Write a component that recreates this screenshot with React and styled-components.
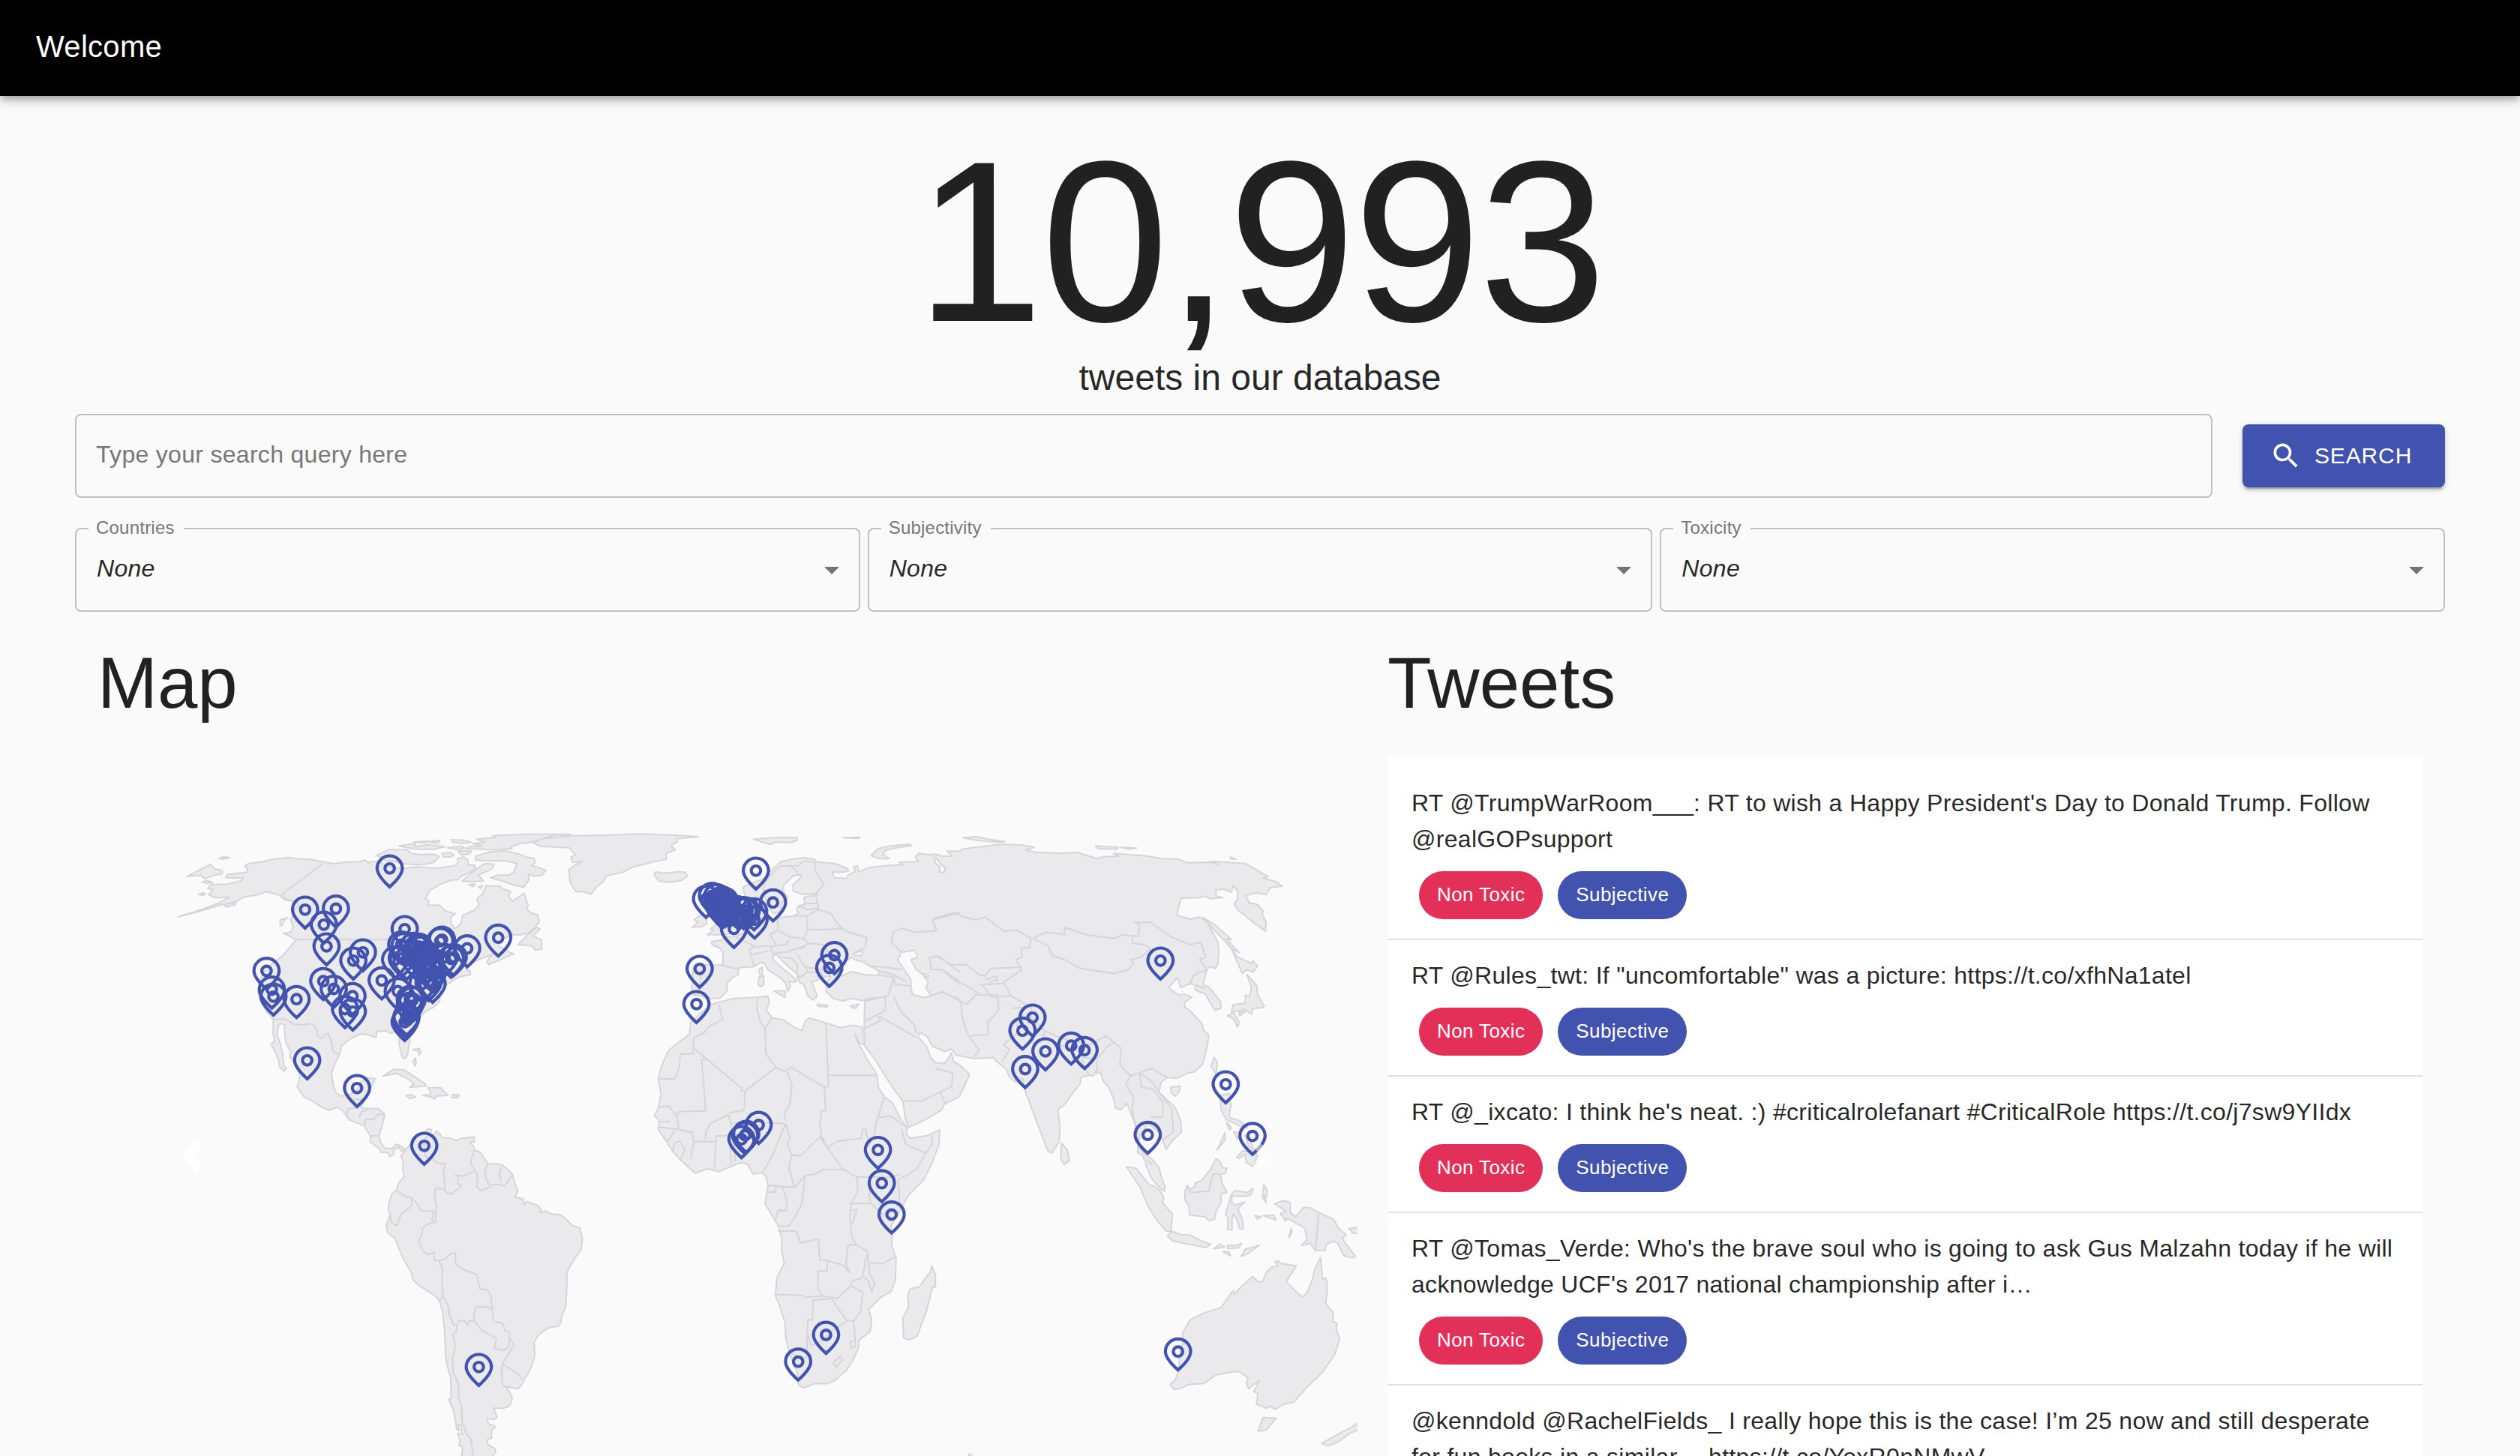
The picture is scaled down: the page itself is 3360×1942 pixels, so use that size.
import React from 'react';
import styled, { createGlobalStyle } from 'styled-components';

const INK = 'rgba(0, 0, 0, 0.87)';
const OUTLINE = '#c0c0c0';
const PRIMARY = '#4153af';
const SECONDARY = '#e33059';
const PAGE = '#fafafa';

const GlobalStyle = createGlobalStyle`
  *, *::before, *::after { box-sizing: border-box; }
  html, body { margin: 0; background: ${PAGE}; }
  body {
    font-family: 'Liberation Sans', Arial, Helvetica, sans-serif;
    color: ${INK};
    font-size: 32px;
    overflow: hidden;
  }
`;

const Page = styled.div`
  height: 100vh;
  overflow: hidden;
  display: flex;
  flex-direction: column;
`;

const AppBar = styled.header`
  flex: none;
  height: 128px;
  padding: 0 48px;
  display: flex;
  align-items: center;
  background: #000;
  box-shadow: 0 4px 8px -2px rgba(0, 0, 0, 0.2), 0 8px 10px rgba(0, 0, 0, 0.14),
    0 2px 20px rgba(0, 0, 0, 0.12);
`;

const AppTitle = styled.h6`
  margin: 0 0 4px;
  color: #fff;
  font-size: 40px;
  font-weight: 400;
  line-height: 64px;
  letter-spacing: 0.0075em;
`;

const Main = styled.main`
  flex: 1;
  padding: 44px 100px 0;
  display: flex;
  flex-direction: column;
`;

const Count = styled.h1`
  margin: 0;
  text-align: center;
  font-size: 306px;
  font-weight: 400;
  line-height: 300px;
  letter-spacing: -3px;
`;

const CountLabel = styled.h5`
  margin: 0 0 16px;
  text-align: center;
  font-size: 48px;
  font-weight: 400;
  line-height: 64px;
`;

const SearchRow = styled.form`
  display: flex;
  align-items: center;
  gap: 40px;
  margin-bottom: 40px;
`;

const SearchInput = styled.input`
  flex: 1;
  height: 112px;
  padding: 0 26px 3px;
  border: 2px solid ${OUTLINE};
  border-radius: 8px;
  background: transparent;
  color: ${INK};
  font: inherit;
  letter-spacing: 0.3px;
  outline: none;
  &::placeholder { color: #777; opacity: 1; }
`;

const SearchButton = styled.button`
  width: 270px;
  height: 84px;
  padding: 0 0 1px 36px;
  border: 0;
  border-radius: 8px;
  display: flex;
  align-items: center;
  gap: 16px;
  background: ${PRIMARY};
  color: #fff;
  font: inherit;
  font-size: 30px;
  letter-spacing: 0.02857em;
  text-transform: uppercase;
  box-shadow: 0 6px 2px -4px rgba(0, 0, 0, 0.2), 0 4px 4px rgba(0, 0, 0, 0.14),
    0 2px 10px rgba(0, 0, 0, 0.12);
`;

const ButtonIcon = styled.svg`
  width: 44px;
  height: 44px;
  fill: currentColor;
`;

const Filters = styled.div`
  display: grid;
  grid-template-columns: repeat(3, 1fr);
  gap: 10px;
  margin-bottom: 40px;
`;

const Select = styled.div`
  position: relative;
  height: 112px;
  padding: 0 12px 0 27px;
  display: flex;
  align-items: center;
  justify-content: space-between;
  border: 2px solid ${OUTLINE};
  border-radius: 8px;
`;

const SelectLabel = styled.label`
  position: absolute;
  top: -16px;
  left: 16px;
  padding: 0 12px 0 10px;
  background: ${PAGE};
  color: #777;
  font-size: 24px;
  line-height: 28px;
  letter-spacing: 0.22px;
`;

const SelectValue = styled.em`
  padding-bottom: 3px;
  letter-spacing: 0.3px;
`;

const SelectArrow = styled.svg`
  width: 48px;
  height: 48px;
  fill: rgba(0, 0, 0, 0.54);
`;

const Columns = styled.div`
  flex: 1;
  display: grid;
  grid-template-columns: 1680px 1380px;
  gap: 40px;
  padding: 0 30px;
`;

const Column = styled.section`
  display: flex;
  flex-direction: column;
`;

const Heading = styled.h3`
  margin: 0 0 42px;
  font-size: 96px;
  font-weight: 400;
  line-height: 110px;
`;

const MapStage = styled.div`
  position: relative;
  width: 1680px;
  height: 1068px;
`;

const MapCanvas = styled.svg`
  display: block;
  width: 1680px;
  height: 1068px;
  overflow: hidden;
`;

const Land = styled.path`
  fill: #eaeaec;
  stroke: #d6d6da;
  stroke-width: 2;
  stroke-linejoin: round;
`;

const Water = styled(Land)`
  fill: ${PAGE};
`;

const Border = styled(Land)`
  fill: none;
`;

const Pin = styled.g`
  fill: none;
  stroke: ${PRIMARY};
  stroke-width: 2;
  stroke-linecap: square;
`;

const SlideControl = styled.button`
  position: absolute;
  top: 0;
  bottom: 0;
  ${(p) => p.$side}: 0;
  width: 15%;
  padding: 0;
  border: 0;
  display: flex;
  align-items: center;
  justify-content: center;
  background: none;
  opacity: ${(p) => (p.$side === 'left' ? 1 : 0.5)};
`;

const Chevron = styled.svg`
  width: 40px;
  height: 40px;
  fill: #fff;
`;

const TweetList = styled.ul`
  margin: 0;
  padding: 16px 0;
  list-style: none;
  background: #fff;
`;

const TweetItem = styled.li`
  padding: 23px 32px 26px;
  border-bottom: 2px solid #e0e0e0;
`;

const TweetText = styled.p`
  margin: 0;
  line-height: 48px;
  letter-spacing: 0.3px;
`;

const ChipRow = styled.div`
  display: flex;
  gap: 20px;
  padding: 19px 10px 0;
`;

const Chip = styled.span`
  height: 64px;
  padding: 0 24px 1px;
  border-radius: 32px;
  display: inline-flex;
  align-items: center;
  background: ${(p) => (p.$tone === 'secondary' ? SECONDARY : PRIMARY)};
  color: #fff;
  font-size: 26px;
  letter-spacing: 0.4px;
`;

/* The map is drawn from regional sheets: each has an origin and a scale per axis. */
const SHEETS = {
  W: [200, 1080, 2.8, 3],
  N: [720, 1080, 2.8, 3],
  E: [1240, 1080, 2.45, 3],
  S: [200, 1480, 2.45, 3],
  F: [840, 1320, 2.529, 2.521],
  P: [1400, 1400, 3, 2.893],
};

const project = (sheet, pair) => {
  const [ox, oy, sx, sy] = SHEETS[sheet];
  const [x, y] = pair.split(',').map(Number);
  return [+(ox + x / sx).toFixed(1), +(oy + y / sy).toFixed(1)];
};

const run = (sheet, points) =>
  points.trim().split(/\s+/).map((p) => project(sheet, p).join(',')).join(' ');

const closed = (...parts) => `M${parts.map(([s, p]) => run(s, p)).join(' ')}Z`;
const many = (sheet, list, end) => list.map((p) => `M${run(sheet, p)}${end}`).join('');

const NORTH_AMERICA = closed(['W', `104,429 150,414 200,397 260,372 296,350 244,352 218,340 236,318 215,316 228,300 285,298
  340,284 348,274 283,272 287,260 362,250 364,240 355,226 366,216 420,208 450,200 516,191 560,198 596,198 650,209 688,216
  720,211 780,208 803,202 812,212 835,206 865,214 900,230 950,234 1000,228 1060,234 1095,230 1140,224 1150,210 1148,196
  1170,188 1186,202 1190,222 1212,222 1214,238 1195,250 1165,264 1150,280 1125,282 1085,298 1045,322 1028,356 1042,364
  1036,382 1080,382 1105,406 1140,416 1125,428 1122,448 1138,476 1160,458 1168,422 1212,402 1228,380 1220,356 1240,340
  1256,304 1306,306 1320,318 1346,326 1338,346 1354,366 1396,334 1412,384 1404,394 1420,412 1446,420 1454,448 1436,470
  1415,492 1385,500 1352,500 1320,516 1300,545 1330,560 1344,572 1358,576 1330,590 1264,620 1258,610 1268,590 1282,576
  1250,590 1225,600 1190,620 1180,640 1196,645 1195,660 1160,668 1135,680 1110,700 1084,720 1082,765 1060,790 1030,806
  1005,832 985,868 968,890 970,925 960,985 950,997 942,990 930,940 932,905 915,885 900,895 880,885 846,887 844,910 830,908
  815,900 785,897 750,915 715,945 707,980 690,1015 678,1055 684,1100 694,1132 712,1146 750,1138 775,1120 790,1085 815,1073
  842,1076 825,1110 812,1130 800,1170 785,1190 800,1195 852,1196 876,1218 868,1260 855,1305 863,1335 878,1355 903,1355
  920,1338 943,1350 954,1362 937,1365 931,1350 912,1360 908,1380 897,1388 886,1372 863,1370 855,1355 823,1330 823,1305
  800,1265 743,1240 720,1205 700,1190 670,1202 640,1190 605,1165 575,1150 550,1110 560,1065 545,1020 522,990 525,965
  510,940 504,910 502,875 504,862 490,855 480,862 474,900 488,940 496,985 500,1025 510,1034 500,1046 484,1030 480,1000
  466,965 452,938 466,925 460,900 460,840 430,800 405,740 408,690 430,640 470,605 500,580 530,540 545,520 520,505 500,495
  525,490 535,470 525,440 540,400 555,378 530,365 505,362 480,340 430,328 410,338 350,350 320,368 260,382 220,396 150,416`]);

const EURASIA = closed(
  ['N', `758,310 800,290 835,275 860,245 900,208 940,198 985,192 1025,198 1030,208 1100,215 1148,235 1152,245 1130,250
    1090,250 1100,272 1145,275 1150,262 1178,245 1170,228 1185,225 1190,250 1225,232 1280,225 1355,220 1340,210 1412,208
    1402,190 1415,175 1450,180 1478,178 1500,186 1540,185 1520,166 1568,165`],
  ['E', `105,158 150,150 235,138 300,142 340,150 312,162 345,170 430,174 480,170 510,182 548,196 560,188 615,186 600,175
    650,180 700,184 760,196 810,198 840,212 915,210 942,220 920,206 1030,215 1105,268 1088,274 1132,288 1150,306 1112,312
    1098,340 1070,332 1032,342 1042,372 1068,378 1088,405 1085,420 1098,450 1096,486 1055,450 1005,400 994,375 1004,360
    1006,325 990,305 984,330 960,318 934,320 935,345 955,352 915,356 900,346 880,352 820,354 806,422 850,438 880,430
    905,448 940,530 944,570 940,620 932,635 912,628 905,640 900,660 893,700 912,710 950,770 950,795 930,802 912,765
    898,735 880,730 865,718 868,702 852,696 840,700 820,712 808,672 780,712 790,722 812,742 832,738 855,750 832,770
    832,790 850,805 890,858 892,880 910,900 908,930 898,985 890,1020 865,1048 840,1055 805,1075 775,1072 755,1090
    748,1130 800,1190 818,1240 822,1290`],
  ['P', `526,318 490,350 465,385 450,348 435,320 400,290 385,292 372,320 360,330 352,370 375,400 410,425 436,455 445,490
    460,530 458,546 440,535 405,495 388,455 372,410 350,398 355,340 345,300 330,260 308,208 283,232 262,226 258,200
    238,150 212,120 205,95 185,80 175,100 150,100 122,108 122,130 105,150 60,210 32,232`],
  ['F', `1450,460 1448,510 1422,550 1408,540 1370,440 1332,340 1325,300 1300,310 1280,295 1270,270 1235,240 1225,228
    1160,232 1100,220 1085,200 1060,208 1020,190 1000,155 975,143 972,160 1000,190 1015,230 1030,245 1060,248 1070,235
    1085,212 1090,240 1120,260 1145,285 1125,330 1110,360 1060,385 1050,405 1000,435 940,462 930,440 920,375 890,335
    860,290 830,240 785,180 790,130 790,90 792,30`],
  ['N', `1212,765 1160,755 1130,765 1095,755 1070,730 1070,700 1085,665 1050,670 1030,685 1015,690 1035,745 1020,762
    1000,745 985,700 968,690 965,660 940,640 900,600 885,580 868,585 870,600 900,630 935,660 958,685 950,690 930,688
    935,705 925,728 918,695 900,675 850,640 838,615 820,612 800,628 742,632 740,660 715,675 698,695 700,720 690,735
    670,755 620,755 600,745 572,740 565,720 568,700 572,630 600,620 678,622 684,610 682,570 670,552 642,540 640,528
    680,520 700,508 730,508 755,495 770,480 800,455 825,450 830,420 850,395 855,440 870,445 900,430 945,425 965,415
    958,400 965,385 990,378 985,355 990,348 1035,342 1035,336 975,338 945,325 945,300 975,270 975,260 945,265 910,300
    905,320 925,350 905,370 895,410 870,415 848,380 840,345 800,375 770,370`]);

const AFRICA = closed(['F', `272,50 300,42 345,30 430,25 465,22 470,40 460,70 480,95 520,102 550,125 580,138 592,105
  605,95 655,110 710,128 745,120 782,125 790,150 790,185 775,180 757,148 770,180 800,235 832,285 838,330 858,360 885,380
  910,430 935,465 932,485 945,500 1005,490 1045,472 1042,520 1020,580 990,640 940,690 900,760 880,795 885,830 882,860
  897,900 895,980 880,1015 845,1035 805,1075 815,1110 810,1150 770,1180 772,1200 755,1240 730,1280 690,1315 665,1325
  620,1325 585,1340 568,1330 565,1290 540,1230 525,1170 523,1120 500,1050 490,1030 495,970 520,920 512,880 510,830
  498,790 455,720 465,660 460,630 445,615 415,620 395,585 370,582 300,612 260,602 220,618 170,572 145,545 120,505
  95,470 98,440 82,422 95,400 105,350 95,300 105,260 130,205 160,180 200,150 205,110`]);

const SOUTH_AMERICA = closed(['S', `835,160 850,140 870,110 890,100 910,75 920,80 912,100 922,110 935,85 945,95 955,112
  985,115 1000,125 1015,115 1060,110 1058,130 1045,130 1058,150 1060,162 1080,172 1105,218 1130,216 1150,222 1170,240
  1185,260 1190,290 1202,322 1192,350 1220,358 1222,382 1230,368 1268,385 1278,402 1275,414 1292,406 1312,418 1340,420
  1365,445 1380,464 1405,474 1413,520 1408,560 1382,605 1362,650 1362,710 1358,790 1345,822 1343,850 1334,866 1300,874
  1270,900 1255,930 1257,985 1248,1020 1238,1050 1222,1080 1215,1100 1202,1118 1180,1112 1160,1108 1172,1125 1184,1155
  1175,1185 1155,1195 1122,1195 1134,1230 1125,1240 1102,1236 1104,1255 1128,1268 1115,1285 1116,1314 1102,1320
  1102,1338 1128,1358 1130,1370 1118,1390 1018,1390 1022,1350 1010,1345 1012,1320 1005,1295 1020,1300 1015,1262
  1006,1260 1010,1285 1002,1280 992,1205 976,1160 984,1155 982,1070 972,1030 966,990 962,880 956,810 946,765 928,742
  880,705 858,680 855,655 825,590 800,515 776,492 772,460 785,420 778,400 780,375 790,338 805,322 812,295 830,268
  826,240 828,215 820,185`]);

const AUSTRALIA = closed(['P', `900,818 912,815 925,825 985,835 945,895 985,935 1010,955 1030,935 1050,885 1058,850
  1082,803 1090,885 1102,880 1108,898 1108,935 1103,980 1133,1015 1132,1050 1148,1055 1145,1080 1158,1115 1140,1175
  1085,1250 1030,1300 975,1360 935,1368 900,1388 880,1375 865,1384 825,1368 832,1325 815,1320 838,1275 795,1308
  785,1290 792,1265 755,1242 720,1245 665,1255 615,1288 555,1292 515,1310 495,1310 480,1292 500,1275 515,1240 518,1180
  532,1130 530,1095 558,1045 610,1018 685,995 720,945 735,930 738,945 760,920 810,875 832,895 850,895 865,860 885,840
  912,835`]);

const ISLANDS = [
  many('W', [
    '138,268 225,218 240,236 270,244 270,256 230,265 205,277 190,262',
    '258,194 275,188 298,192 270,198',
    '195,288 215,284 235,292 212,295',
    '182,338 200,332 208,338 195,343',
    '278,380 320,370 318,380 285,390',
    '486,464 486,440 514,432 500,444 492,464',
    '843,184 890,160 960,160 975,175 1010,180 1060,178 1080,188 1060,210 1030,218 990,220 940,215 900,205 880,205 870,190',
    '930,145 990,135 985,148 1040,140 1100,148 1060,158 990,158',
    '985,130 1040,125 1030,133',
    '1040,128 1082,122 1075,134',
    '1090,175 1125,172 1135,182 1120,190 1095,188',
    '1150,165 1200,165 1190,178 1160,180',
    '1125,120 1175,122 1200,130 1160,134 1130,130',
    '1110,152 1160,146 1175,152 1150,160',
    '1220,118 1290,112 1280,104 1400,98 1568,98 1568,106 1470,115 1440,128 1380,135 1345,150 1352,156 1290,160 1180,156 1190,148 1240,145 1205,136 1250,130',
    '1214,202 1218,185 1270,168 1330,165 1380,178 1405,190 1435,195 1438,212 1425,222 1478,242 1464,262 1435,266 1412,258 1415,280 1395,310 1360,302 1330,290 1272,272 1300,262 1340,262 1358,250 1370,215 1330,205 1270,205',
    '1165,285 1215,240 1250,215 1285,218 1275,238 1225,262 1245,285 1205,288',
    '1190,300 1215,298 1205,308',
    '1225,310 1240,304 1238,316',
    '1374,540 1412,498 1445,470 1456,478 1430,505 1462,520 1462,558 1440,562 1425,545',
    '870,1066 910,1038 950,1042 990,1070 1028,1098 1030,1106 970,1110 985,1098 960,1075 920,1055',
    '1018,1142 1050,1140 1038,1112 1085,1112 1112,1142 1070,1146 1062,1158 1050,1150',
    '956,1144 975,1140 992,1150 970,1156',
    '1128,1140 1153,1140 1150,1152 1128,1152',
    '982,960 1005,955 1012,970 1005,982 1000,965',
    '990,992 994,1010 990,1026 982,1010',
  ], 'Z'),
  many('N', [
    '-30,130 0,120 60,100 130,104 255,102 370,96 500,102 590,108 510,116 512,128 488,145 505,160 470,175 472,198 425,208 345,230 310,250 248,265 235,290 212,308 190,338 160,328 134,328 112,290 108,240 130,222 160,206 120,210 115,190 132,180 108,152 0,146',
    '426,260 432,248 460,254 520,248 542,250 550,266 530,282 485,290 445,286',
    '798,118 870,112 960,112 960,122 935,132 880,130 860,138 835,132',
    '1132,112 1195,110 1190,115',
    '1236,184 1262,156 1300,146 1380,138 1388,144 1330,152 1290,162 1280,180 1305,196 1265,196',
    '570,470 590,448 575,440 600,420 622,430 622,455 605,468',
    '624,500 650,482 636,478 655,460 660,420 640,400 640,350 670,340 690,400 710,450 740,470 730,490 690,500',
    '818,670 835,665 836,700 826,708 814,700',
    '818,640 830,630 830,660 820,660',
    '874,725 915,724 915,752',
    '1035,778 1075,784 1072,790 1036,786',
    '1158,785 1190,778 1175,796',
  ], 'Z'),
  many('E', [
    '108,112 150,108 190,118 245,128 220,130 150,122',
    '540,145 615,150 610,158 550,156',
    '622,150 675,154 650,158',
    '980,190 1000,198 985,198',
    '890,430 930,460 985,520 968,516 1010,572 985,555',
    '985,555 1005,590 1050,615 1055,605 1070,626 1055,650 1035,640 1020,655',
    '1035,660 1068,705 1070,740 1092,785 1085,792 1055,795 1050,818 1030,800 985,810 990,780 1030,775 1030,742 1045,745 1050,710',
    '972,825 992,812 1010,850 1005,870 990,835',
    '1008,812 1030,808 1012,825',
    '928,990 938,1010 935,1060 918,1025',
  ], 'Z'),
  many('F', [
    '1018,928 1030,960 1030,1000 1020,1000 1000,1080 968,1165 940,1178 922,1170 920,1105 940,1065 936,1030 945,1005 975,1000 1000,965 1012,950',
    '1455,515 1475,540 1482,575 1465,588 1452,570',
    '1135,1575 1145,1560 1160,1575',
  ], 'Z'),
  many('P', [
    '482,145 520,140 518,160 502,180 485,168',
    '680,175 718,170 724,220 715,260 760,275 790,300 770,300 740,285 705,270 685,235',
    '668,388 700,320 702,345',
    '705,280 725,300 718,310',
    '735,318 760,320 750,345',
    '748,415 770,390 800,395 820,380 828,410 820,440 810,450 785,435 780,405 755,420',
    '780,330 800,350 815,385 795,375',
    '540,545 550,525 560,538 578,530 580,515 605,505 640,465 665,420 680,432 690,455 708,458 700,478 680,480 690,520 708,552 685,555 685,590 665,620 658,655 635,660 620,645 558,638 556,605 540,580',
    '305,452 345,458 400,525 415,525 440,545 455,570 450,590 490,635 484,700 465,700 425,655 390,600 360,530',
    '470,720 485,700 525,715 560,715 600,735 642,752 622,764 550,750 490,738',
    '655,768 680,750 698,762',
    '710,755 745,755 765,748 755,765 712,768',
    '765,798 780,770 838,755 795,785',
    '692,780 715,780 722,796',
    '725,560 740,543 790,552 812,535 805,560 780,566 730,566 725,585 740,600 780,588 765,600 752,615 768,650 775,690 760,692 745,650 735,635 728,650 728,695 710,695 712,650 702,635',
    '855,520 870,545 865,570 858,560 865,592 850,570',
    '853,640 895,638 905,658 880,650',
    '820,640 845,645 830,655',
    '898,595 935,582 960,590 962,628 982,645 1015,608 1040,610 1075,628 1135,655 1155,690 1185,715 1168,728 1222,798 1210,804 1175,795 1150,745 1130,740 1105,752 1100,775 1062,775 1040,748 1005,755 1028,735 1020,690 975,665 945,650 942,662 922,632 945,625 920,608',
    '955,725 965,690 968,705',
    '1195,690 1240,685 1240,710 1210,708',
    '852,1420 905,1422 865,1468 832,1472',
    '1085,1520 1150,1485 1200,1460 1240,1436 1240,1465 1200,1480 1150,1515 1115,1528',
  ], 'Z'),
].join('');

const SEAS = many('N', [
  '1105,655 1120,620 1150,600 1165,590 1175,600 1205,608 1230,625 1265,645 1262,662 1215,660 1160,648 1130,665',
  '1170,575 1205,565 1200,585 1175,582',
  '1335,600 1350,570 1400,562 1410,590 1385,600 1405,640 1430,660 1450,690 1440,710 1460,745 1430,752 1390,738 1385,705 1385,680 1360,640',
  '1430,655 1452,665 1435,672',
  '1470,195 1480,195 1495,218 1514,232 1508,252 1490,248 1494,230 1478,215',
], 'Z');

const BORDERS = [
  many('W', [
    '650,212 502,330 490,345 505,355 530,365',
    '545,520 945,520 1010,545',
    '460,840 498,836 540,858 582,862 585,856 608,858 622,880 625,905 640,915 665,895 678,930 682,965 707,982',
    '735,1230 740,1196 775,1192', '780,1235 790,1208 812,1200',
    '800,1262 805,1240 835,1240 850,1220 876,1218', '798,1160 760,1158 765,1185', '823,1305 855,1305',
  ], ''),
  many('S', [
    '912,100 892,125 900,170 897,185 925,200 938,215 965,215 958,250 962,290 965,318',
    '932,316 958,316 968,332 985,338 1005,318 1018,303 1005,298 1005,265 998,262 1020,266 1050,252 1062,240',
    '1060,162 1052,190 1048,215 1060,240 1070,262 1068,310 1082,325 1110,310',
    '1105,218 1094,240 1098,280 1115,312', '1110,310 1118,300 1138,300 1160,306 1172,280 1185,260',
    '1148,228 1142,255 1147,290',
    '932,316 930,335 936,342 928,350 936,380 932,450 920,440 928,408 900,405 886,405 870,372 855,355 830,345 805,322',
    '855,355 855,385 820,420 805,465 788,452 785,420',
    '932,450 905,458 890,475 888,500 878,520 890,565 910,580 928,570 928,602 945,604 960,600 985,576 998,574 998,615 1020,638 1068,660 1078,718 1102,720 1115,750 1117,790 1122,848',
    '945,604 955,635 954,700 958,745 946,765',
    '958,745 975,790 976,812 992,862 1002,862 1010,842 1030,848 1038,862 1042,845 1060,848',
    '1060,848 1058,820 1065,790 1105,788 1115,800',
    '1060,848 1085,885 1132,915 1125,955 1155,964 1172,950 1175,890 1160,885 1152,855 1122,848',
    '1175,915 1190,940 1175,970 1152,1015 1148,1050 1152,1105 1160,1108', '1152,1018 1205,1060 1215,1080',
    '1002,862 1002,885 990,900 998,950 988,990 990,1050 1008,1100 1008,1150 1018,1190 1020,1250 1035,1300 1048,1315 1056,1390',
  ], ''),
  many('F', [
    '300,50 312,100 265,125 250,145 215,162 213,215 170,217 165,265 152,300 95,300',
    '213,195 375,330 375,340 388,340 492,262 522,275 545,262 655,328 670,325 660,115',
    '388,340 385,405 335,415', '255,408 165,410 160,425', '258,235 242,235 255,408',
    '430,25 428,65 440,110 455,130', '480,95 455,130 458,215 492,262', '672,288 832,288',
    '655,328 660,405 645,408 640,450 645,490 665,530', '530,275 546,320 540,380 520,420 525,440',
    '333,420 270,450 255,480 255,505', '290,492 330,490 345,470 333,420', '345,450 400,445 520,450',
    '98,395 130,390 158,425 165,470 95,462', '98,445 135,443', '165,470 210,480 215,510 205,570',
    '125,515 150,475', '145,545 150,515 170,510 185,540 170,572', '215,510 285,512', '290,490 285,605',
    '335,490 342,585', '350,500 355,580',
    '525,450 500,510 480,560 450,612', '525,450 540,500 530,520 545,555 535,600 555,665',
    '545,555 575,560 640,495 665,530 720,605 650,605 625,620 590,625 555,665 465,658',
    '665,530 700,510 780,500 785,470 795,470 805,520', '720,605 765,630 880,630 910,620',
    '835,430 820,500 800,530', '858,360 835,430 880,425 935,465', '1018,490 1018,520 998,550 930,520 915,470',
    '998,550 965,605 905,640 910,720', '465,660 492,660 490,680 462,682',
    '515,665 530,710 525,745 500,742 490,775', '590,625 580,720 555,765 535,795 498,795',
    '500,812 560,812 575,852 635,838 640,908 665,910 665,945 635,945 633,1005 650,1030',
    '765,630 768,680 745,720 742,770 748,830 762,858 735,860 728,925 742,950 715,925 665,912',
    '762,858 800,880 808,955 825,990 815,1018 805,980 785,965 795,900', '808,918 850,922 895,898',
    '748,720 810,718 805,640', '810,718 880,780', '748,740 765,740 750,785',
    '650,1030 700,1038 745,995 750,980 785,968', '745,995 785,1018 778,1080 755,1115 730,1112 680,1040',
    '492,1025 585,1028 590,1035 650,1030', '618,1040 615,1110 600,1110 595,1240 545,1225',
    '618,1045 680,1038', '600,1160 610,1198 650,1180 690,1140 730,1115',
    '755,1115 760,1200 745,1205 742,1185 755,1180', '685,1255 710,1232 718,1245 695,1270 685,1255',
    '840,90 965,160', '790,130 845,105 835,90', '795,30 862,25 860,70 795,105',
    '890,25 915,75 960,120 965,145', '925,375 980,375 1045,345 1085,325 1088,280 1030,265', '1045,345 1065,385',
  ], ''),
  many('N', [
    '678,622 742,640', '600,640 598,700 590,740', '730,508 800,545 782,560 795,610 800,628',
    '782,560 790,552 830,545 870,545 860,560 870,575', '885,430 890,480 860,500 880,540', '795,580 850,565',
    '995,425 1000,480 985,515 935,510 890,485', '1000,480 1060,480 1130,475 1150,490 1220,510 1215,550 1170,575',
    '985,515 1000,535 1060,540', '975,560 1000,535', '1060,540 1090,600', '960,580 990,630 1055,640',
    '870,545 920,540 930,520', '870,575 920,570 985,545', '900,590 940,595 960,620 960,680',
    '990,630 1000,650 970,670', '1000,650 1050,650 1060,670', '945,425 995,425 1040,400 1085,415 1110,455 1130,475',
    '965,385 1000,400 1040,395 1030,345', '985,375 1040,375', '1030,208 1025,240 1060,300 1030,335',
    '840,345 835,300 870,250 900,225 960,225', '930,220 960,250 965,260', '960,225 985,205 1025,210',
    '1310,530 1320,490 1350,475 1400,490 1480,485 1465,440 1568,412', '1310,530 1350,570',
    '1265,645 1320,660 1370,690', '1320,660 1325,700 1385,705', '1265,662 1320,670 1300,745 1215,765',
    '1455,590 1490,588 1568,650', '1455,590 1460,640 1500,640 1568,700', '1460,745 1500,730 1568,760',
    '1230,625 1290,630 1350,640',
  ], ''),
  many('E', [
    '10,435 80,412 110,430 150,440 180,430 240,485 285,482 330,515 325,550 300,555 300,590 280,600 300,640 240,690',
    '0,590 20,585 70,620 120,620 160,660 180,665 200,635 300,630', '180,680 215,665 220,680 195,690',
    '0,640 40,640 100,690 160,735', '160,700 240,695',
    '335,515 380,490 440,500 440,470 510,500 600,515 630,500 680,508 685,460 668,450 720,450 790,510 850,540 885,530 900,590 880,600 905,640',
    '335,515 385,545 400,585 440,600 490,635 600,655 650,640 665,610 655,600 690,590 720,555 700,540 662,535 660,510',
    '850,695 860,665 880,650 905,640', '868,702 898,715',
    '240,690 265,745 300,770 330,790 330,830 375,885 430,915 520,940 575,905 600,930 625,955 620,1020 655,1065 725,1035 775,1072',
    '265,745 200,750 170,700', '0,745 40,728 75,750 120,780 150,740 220,740 225,800 190,850 190,900 125,905 160,960 145,990',
    '100,765 105,830 125,905', '265,795 330,790', '330,830 280,840 290,890 240,940 260,960 235,1010',
    '375,885 370,910 450,955 500,945', '495,960 500,1020 520,1060', '545,1060 545,1000 500,990', '545,1000 580,945 600,930',
    '655,1065 640,1100 665,1150 660,1200 675,1290', '685,1050 690,1110 730,1120 760,1170 760,1230 720,1230',
    '685,1050 725,1090 790,1200 795,1290 760,1320',
  ], ''),
  many('P', ['550,540 565,552 635,545 652,480 680,480', '1075,628 1062,775', '385,425 410,445'], ''),
].join('');

const PINS = {
  W: `895,235 579,400 694,396 649,460 659,547 795,571 759,604 435,645 455,720 461,748 547,758 647,686 686,717
    756,746 728,798 757,808 587,1003 773,1114 1300,512 951,478 1184,555 1090,520 1084,526 1124,597 1134,590
    865,683 925,726 938,540 950,545 915,600 940,595 958,605 1004,548 1010,560 1015,590
    1020,600 1030,580 990,600 1035,620 1040,640 1050,650 1055,656 1017,697 1040,690 1055,697 970,757
    980,762 970,784 951,850 956,838 958,828 1000,580 1045,600 1100,590 985,545`,
  N: `806,244 870,371 596,637 584,778 1099,582 1080,633 724,477 801,440 799,407 760,402 772,405 620,357
    642,345 660,350 670,370 680,360 690,365 685,380 672,390 680,400 700,390 665,380
    690,395 745,402 735,398`,
  F: '434,455 392,485 388,490 376,503 836,539 849,651 882,756 661,1161 567,1251',
  E: '753,604 335,832 302,884 377,967 461,944 505,962 311,1038 966,1099',
  P: '391,329 810,333 512,1165',
  S: '896,145 1074,1030',
};

const pinPositions = Object.entries(PINS).flatMap(([sheet, points]) =>
  points.trim().split(/\s+/).map((p) => project(sheet, p)));

const tweets = [
  "RT @TrumpWarRoom___: RT to wish a Happy President's Day to Donald Trump. Follow @realGOPsupport",
  'RT @Rules_twt: If "uncomfortable" was a picture: https://t.co/xfhNa1atel',
  "RT @_ixcato: I think he's neat. :) #criticalrolefanart #CriticalRole https://t.co/j7sw9YIIdx",
  "RT @Tomas_Verde: Who's the brave soul who is going to ask Gus Malzahn today if he will acknowledge UCF's 2017 national championship after i…",
  '@kenndold @RachelFields_ I really hope this is the case! I’m 25 now and still desperate for fun books in a similar… https://t.co/YoxR0nNMwV',
];

const filters = ['Countries', 'Subjectivity', 'Toxicity'];

function WorldMap() {
  return (
    <MapStage>
      <MapCanvas viewBox="130 1008 1680 1068">
        {[NORTH_AMERICA, SOUTH_AMERICA, EURASIA, AFRICA, AUSTRALIA, ISLANDS].map((d, i) => (
          <Land key={i} d={d} />
        ))}
        <Border d={BORDERS} />
        <Water d={SEAS} />
        {pinPositions.map(([x, y], i) => (
          <Pin key={i} transform={`translate(${x} ${y}) scale(2.1) translate(-12 -10)`}>
            <circle cx="12" cy="10" r="3" />
            <path d="M12 21.7C17.3 17 20 13 20 10a8 8 0 1 0-16 0c0 3 2.7 6.9 8 11.7z" />
          </Pin>
        ))}
      </MapCanvas>
      <SlideControl $side="left" aria-label="Previous">
        <Chevron viewBox="0 0 8 8">
          <path d="M5.25 0l-4 4 4 4 1.5-1.5-2.5-2.5 2.5-2.5-1.5-1.5z" />
        </Chevron>
      </SlideControl>
      <SlideControl $side="right" aria-label="Next">
        <Chevron viewBox="0 0 8 8">
          <path d="M2.75 0l-1.5 1.5 2.5 2.5-2.5 2.5 1.5 1.5 4-4-4-4z" />
        </Chevron>
      </SlideControl>
    </MapStage>
  );
}

export default function App() {
  return (
    <Page>
      <GlobalStyle />
      <AppBar>
        <AppTitle>Welcome</AppTitle>
      </AppBar>
      <Main>
        <Count>10,993</Count>
        <CountLabel>tweets in our database</CountLabel>
        <SearchRow>
          <SearchInput placeholder="Type your search query here" />
          <SearchButton type="button">
            <ButtonIcon viewBox="0 0 24 24">
              <path d="M15.5 14h-.79l-.28-.27C15.41 12.59 16 11.11 16 9.5 16 5.91 13.09 3 9.5 3S3 5.91 3 9.5 5.91 16 9.5 16c1.61 0 3.09-.59 4.23-1.57l.27.28v.79l5 4.99L20.49 19l-4.99-5zm-6 0C7.01 14 5 11.99 5 9.5S7.01 5 9.5 5 14 7.01 14 9.5 11.99 14 9.5 14z" />
            </ButtonIcon>
            Search
          </SearchButton>
        </SearchRow>
        <Filters>
          {filters.map((name) => (
            <Select key={name}>
              <SelectLabel>{name}</SelectLabel>
              <SelectValue>None</SelectValue>
              <SelectArrow viewBox="0 0 24 24">
                <path d="M7 10l5 5 5-5z" />
              </SelectArrow>
            </Select>
          ))}
        </Filters>
        <Columns>
          <Column>
            <Heading>Map</Heading>
            <WorldMap />
          </Column>
          <Column>
            <Heading>Tweets</Heading>
            <TweetList>
              {tweets.map((text) => (
                <TweetItem key={text}>
                  <TweetText>{text}</TweetText>
                  <ChipRow>
                    <Chip $tone="secondary">Non Toxic</Chip>
                    <Chip $tone="primary">Subjective</Chip>
                  </ChipRow>
                </TweetItem>
              ))}
            </TweetList>
          </Column>
        </Columns>
      </Main>
    </Page>
  );
}
